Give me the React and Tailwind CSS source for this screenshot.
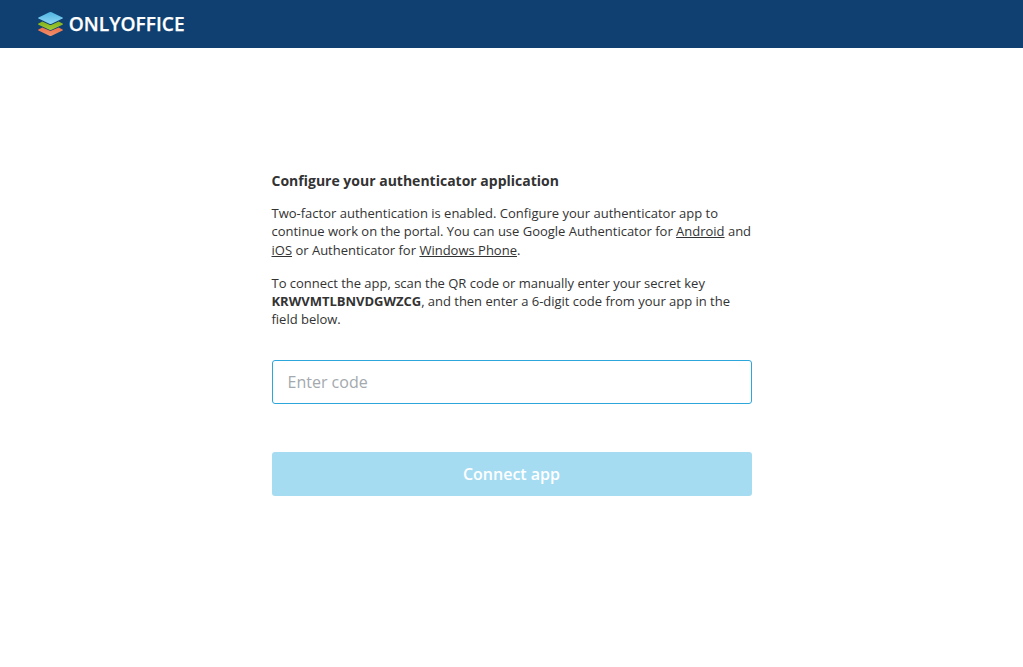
function Logo() {
  return (
    <div className="flex items-center">
      <svg className="h-[26px] w-[27px]" viewBox="0 0 27 26" aria-hidden="true">
        <defs>
          <linearGradient id="blue" x1="0" y1="0" x2="0" y2="1"><stop offset="0" stopColor="#4fb5e2" /><stop offset="1" stopColor="#8ed6f3" /></linearGradient>
          <linearGradient id="green" x1="0" y1="0" x2="0" y2="1"><stop offset="0" stopColor="#82b01c" /><stop offset="1" stopColor="#a2cb35" /></linearGradient>
          <linearGradient id="red" x1="0" y1="0" x2="0" y2="1"><stop offset="0" stopColor="#ee7048" /><stop offset="1" stopColor="#f3906e" /></linearGradient>
        </defs>
        <path fill="url(#red)" d="M1.5 18.4 5.3 16.4 12.4 19.4Q13.5 19.9 14.6 19.4L21.7 16.4 25.5 18.4Q26.6 19 25.5 19.6L14.6 24.7Q13.5 25.2 12.4 24.7L1.5 19.6Q.4 19 1.5 18.4Z" />
        <path fill="url(#green)" d="M1.5 12.6 5.3 10.6 12.4 13.8Q13.5 14.3 14.6 13.8L21.7 10.6 25.5 12.6Q26.6 13.2 25.5 13.8L14.6 18.7Q13.5 19.2 12.4 18.7L1.5 13.8Q.4 13.2 1.5 12.6Z" />
        <path fill="url(#blue)" d="M12.4 1.3Q13.5.8 14.6 1.3L25.5 6.4Q26.6 7 25.5 7.6L14.6 12.7Q13.5 13.2 12.4 12.7L1.5 7.6Q.4 7 1.5 6.4Z" />
      </svg>
      <svg className="ml-1 h-[30px] w-[122px] overflow-visible" viewBox="0 0 122 30" role="img" aria-label="ONLYOFFICE">
        <text x="0.8" y="22.3" textLength="115.8" lengthAdjust="spacingAndGlyphs" fill="#fff" stroke="#fff" strokeWidth="0.25" className="font-['Open_Sans',sans-serif] text-[20px] font-semibold">ONLYOFFICE</text>
      </svg>
    </div>
  );
}

export default function App() {
  return (
    <div className="min-h-screen bg-white font-['Open_Sans',sans-serif] text-[#333]">
      <header className="flex h-12 items-center bg-[#0f4071] pl-[37px]"><Logo /></header>
      <main className="mx-auto w-[480px] pt-[124px]">
        <h1 className="text-[14px] leading-[18px] font-bold">Configure your authenticator application</h1>
        <p className="mt-[14.15px] text-[13px] leading-[18.2px] whitespace-nowrap">
          Two-factor authentication is enabled. Configure your authenticator app to<br />
          <span className="tracking-[-0.008px]">continue work on the portal. You can use Google Authenticator for <a href="#" className="underline">Android</a> and</span><br />
          <a href="#" className="underline">iOS</a> or Authenticator for <a href="#" className="underline">Windows Phone</a>.
        </p>
        <p className="mt-[14.85px] text-[13px] leading-[18.2px] tracking-[-0.02px] whitespace-nowrap">
          To connect the app, scan the QR code or manually enter your secret key<br />
          <b>KRWVMTLBNVDGWZCG</b>, and then enter a 6-digit code from your app in the<br />
          field below.
        </p>
        <input aria-label="Enter code" placeholder="Enter code" className="mt-[31.8px] block h-11 w-full rounded-[3px] border border-[#2da7db] px-[15px] text-[16px] outline-none placeholder:text-[#a3a9ae]" />
        <button disabled className="mt-12 block h-11 w-full rounded-[3px] bg-[#a6dcf2] text-[16px] font-semibold text-white">Connect app</button>
      </main>
    </div>
  );
}
